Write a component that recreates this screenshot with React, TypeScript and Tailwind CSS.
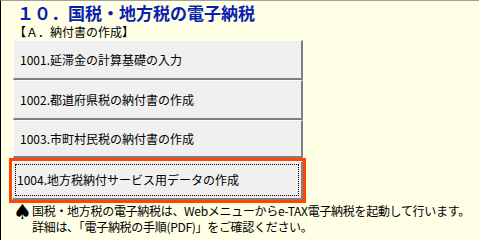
import React from 'react'

const items = [
  { code: '1001', label: '延滞金の計算基礎の入力' },
  { code: '1002', label: '都道府県税の納付書の作成' },
  { code: '1003', label: '市町村民税の納付書の作成' },
]

function MenuButton({ code, label, h }: { code: string; label: string; h: string }) {
  return (
    <div
      className={`${h} flex items-center bg-[#f0f0f0] border-t border-l border-t-white border-l-white border-r-2 border-b-2 border-r-[#808080] border-b-[#808080] pl-[6px] text-[12px] text-black`}
    >
      {code}.{label}
    </div>
  )
}

export default function App() {
  return (
    <div className="w-[479px] h-[240px] overflow-hidden bg-[#ffffe6] border-t border-t-[#a0a0a0] border-l border-l-black font-['Noto_Sans_CJK_JP',sans-serif]">
      {/* title */}
      <div className="h-[24px] pl-[16px] text-[17px] leading-[24px] font-bold text-[#0a1eb0]">
        １０．国税・地方税の電子納税
      </div>
      <div className="h-[14px] pl-[13px] text-[12px] leading-[14px] text-black">
        【Ａ．納付書の作成】
      </div>

      {/* menu */}
      <div className="mt-[1px] ml-[12px] w-[290px] flex flex-col">
        <MenuButton code={items[0].code} label={items[0].label} h="h-[40px]" />
        <MenuButton code={items[1].code} label={items[1].label} h="h-[40px]" />
        <MenuButton code={items[2].code} label={items[2].label} h="h-[38px]" />
        <div className="-ml-[4px] w-[297px] h-[45px] border-[3px] border-[#ff4500]">
          <div className="h-full bg-[#f0f0f0] border-t border-l border-t-white border-l-white border-r-2 border-b-2 border-r-[#808080] border-b-[#808080] p-[2px]">
            <div className="h-full flex items-center border border-dotted border-black pl-[1px] text-[12px] text-black">
              1004.地方税納付サービス用データの作成
            </div>
          </div>
        </div>
      </div>

      {/* note */}
      <div className="flex pl-[12px] text-[12px] leading-[16px] text-black">
        <span className="w-[19px] shrink-0 text-[21px] leading-[18px] font-['DejaVu_Sans',sans-serif]">♠</span>
        <div className="whitespace-nowrap tracking-[-0.3px]">
          <div>国税・地方税の電子納税は、Webメニューからe-TAX電子納税を起動して行います。</div>
          <div>詳細は、「電子納税の手順(PDF)」をご確認ください。</div>
        </div>
      </div>
    </div>
  )
}
